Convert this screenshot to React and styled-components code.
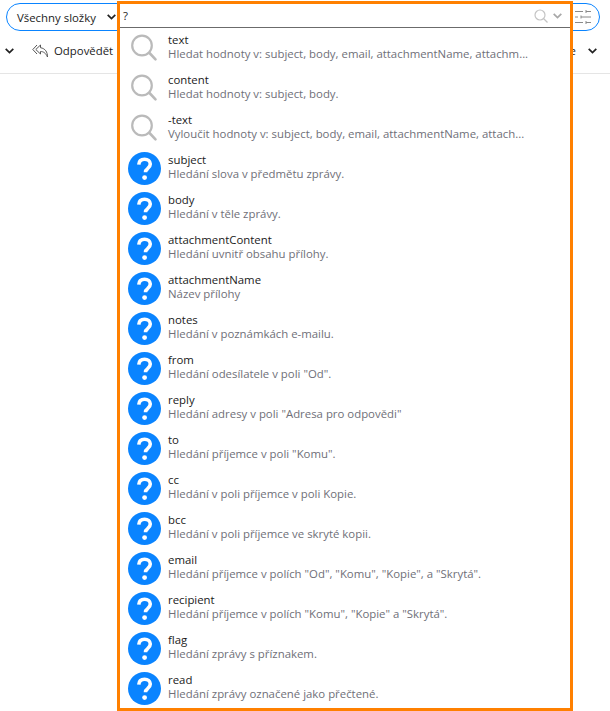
import React from 'react';
import styled, { createGlobalStyle } from 'styled-components';

const GlobalStyle = createGlobalStyle`
  html, body {
    margin: 0;
    padding: 0;
    background: #fff;
    font-family: "Open Sans", "Noto Sans", sans-serif;
  }
`;

const Page = styled.div`
  position: relative;
  width: 610px;
  height: 711px;
  overflow: hidden;
  background: #fff;
`;

const SearchBar = styled.div`
  display: flex;
  align-items: center;
  justify-content: space-between;
  box-sizing: border-box;
  height: 28px;
  margin: 3px 10px 0 6px;
  padding: 0 8px 0 10px;
  border: 1px solid #0a84ff;
  border-radius: 14px;
  font-size: 11.4px;
  color: #222;
`;

const FolderPick = styled.div`
  display: flex;
  align-items: center;
  gap: 11px;
`;

const Toolbar = styled.div`
  display: flex;
  align-items: center;
  justify-content: space-between;
  box-sizing: border-box;
  height: 43px;
  padding: 0 13px 3px 5px;
  border-bottom: 1px solid #e5e5e5;
  font-size: 11.4px;
  color: #222;
`;

const ToolGroup = styled.div`
  display: flex;
  align-items: center;
  gap: ${props => props.$gap}px;
`;

const ReplyBtn = styled.div`
  display: flex;
  align-items: center;
  gap: 6px;
`;

const Popup = styled.div`
  position: absolute;
  left: 117px;
  top: 1px;
  width: 456px;
  height: 710px;
  box-sizing: border-box;
  border: 3px solid #ff8000;
  background: #fff;
`;

const InputRow = styled.div`
  display: flex;
  align-items: center;
  justify-content: space-between;
  box-sizing: border-box;
  height: 24px;
  padding: 0 8px 0 3px;
  border-bottom: 1px solid #6b6b6b;
  font-size: 11.4px;
  color: #222;
`;

const InputIcons = styled.div`
  display: flex;
  align-items: center;
  gap: 5px;
`;

const Row = styled.div`
  display: flex;
  align-items: center;
  height: 40px;
  padding-left: 8px;
`;

const IconBox = styled.div`
  display: flex;
  align-items: center;
  justify-content: center;
  flex: none;
  width: 33px;
  height: 33px;
  margin-right: 7px;
`;

const RowText = styled.div`
  min-width: 0;
  margin-top: -3px;
`;

const Name = styled.div`
  font-size: 11.4px;
  line-height: 14px;
  color: #1a1a1a;
`;

const Desc = styled.div`
  font-size: 11.4px;
  line-height: 14px;
  color: #6f6f78;
  white-space: nowrap;
`;

const Chevron = ({ color = '#222' }) => (
  <svg width="9" height="6" viewBox="0 0 9 6" fill="none">
    <path d="M.7.8l3.800 3.800L8.300.8" stroke={color} strokeWidth="1.7" />
  </svg>
);

const SearchIcon = () => (
  <svg width="33" height="33" viewBox="0 0 33 33" fill="none">
    <circle cx="14" cy="13.500" r="9.800" stroke="#bababa" strokeWidth="2.200" />
    <path d="M21.500 21l6 6.300" stroke="#bababa" strokeWidth="2.600" strokeLinecap="round" />
  </svg>
);

const HelpIcon = () => (
  <svg width="33" height="33" viewBox="0 0 33 33">
    <circle cx="16.500" cy="16.500" r="16.500" fill="#0a84ff" />
    <path d="M10.800 12.600c.2-3.500 2.600-5.300 5.800-5.300 3.300 0 5.700 1.900 5.700 4.800 0 2.300-1.200 3.400-2.700 4.600-1.500 1.100-2.100 1.900-2.100 3.500" fill="none" stroke="#fff" strokeWidth="3.600" />
    <circle cx="16.600" cy="25.600" r="2.400" fill="#fff" />
  </svg>
);

const FilterIcon = () => (
  <svg width="16" height="14" viewBox="0 0 16 14" fill="none" stroke="#8a8a8a" strokeWidth="1">
    <path d="M0 1.500h8M11 1.500h5M11 0v3M0 7h3M6 7h10M6 5.500v3M0 12.500h8M11 12.500h5M11 11v3" />
  </svg>
);

const ReplyAllIcon = () => (
  <svg width="16" height="14" viewBox="0 0 16 14" fill="none" stroke="#555" strokeWidth="1">
    <path d="M5 1L.8 5.500 5 10" />
    <path d="M8.500 1L3.800 5.500 8.500 10V7.500c3 0 5.200 1.500 7 5.500 0-5-2.200-8.500-7-9.300z" />
  </svg>
);

const items = [
  ['text', 'Hledat hodnoty v: subject, body, email, attachmentName, attachm...', 'search'],
  ['content', 'Hledat hodnoty v: subject, body.', 'search'],
  ['-text', 'Vyloučit hodnoty v: subject, body, email, attachmentName, attach...', 'search'],
  ['subject', 'Hledání slova v předmětu zprávy.'],
  ['body', 'Hledání v těle zprávy.'],
  ['attachmentContent', 'Hledání uvnitř obsahu přílohy.'],
  ['attachmentName', 'Název přílohy'],
  ['notes', 'Hledání v poznámkách e-mailu.'],
  ['from', 'Hledání odesílatele v poli "Od".'],
  ['reply', 'Hledání adresy v poli "Adresa pro odpovědi"'],
  ['to', 'Hledání příjemce v poli "Komu".'],
  ['cc', 'Hledání v poli příjemce v poli Kopie.'],
  ['bcc', 'Hledání v poli příjemce ve skryté kopii.'],
  ['email', 'Hledání příjemce v polích "Od", "Komu", "Kopie", a "Skrytá".'],
  ['recipient', 'Hledání příjemce v polích "Komu", "Kopie" a "Skrytá".'],
  ['flag', 'Hledání zprávy s příznakem.'],
  ['read', 'Hledání zprávy označené jako přečtené.'],
];

export default function App() {
  return (
    <Page>
      <GlobalStyle />
      <SearchBar>
        <FolderPick>
          Všechny složky
          <Chevron />
        </FolderPick>
        <FilterIcon />
      </SearchBar>
      <Toolbar>
        <ToolGroup $gap={18}>
          <Chevron />
          <ReplyBtn>
            <ReplyAllIcon />
            Odpovědět
          </ReplyBtn>
        </ToolGroup>
        <ToolGroup $gap={12}>
          <span>e</span>
          <Chevron />
        </ToolGroup>
      </Toolbar>
      <Popup>
        <InputRow>
          ?
          <InputIcons>
            <svg width="14" height="14" viewBox="0 0 14 14" fill="none" stroke="#c4c4c4" strokeWidth="1.200">
              <circle cx="6" cy="6" r="5" />
              <path d="M9.500 9.500l4 4" />
            </svg>
            <Chevron color="#a8a8a8" />
          </InputIcons>
        </InputRow>
        {items.map(([name, desc, kind]) => (
          <Row key={name}>
            <IconBox>{kind === 'search' ? <SearchIcon /> : <HelpIcon />}</IconBox>
            <RowText>
              <Name>{name}</Name>
              <Desc>{desc}</Desc>
            </RowText>
          </Row>
        ))}
      </Popup>
    </Page>
  );
}
